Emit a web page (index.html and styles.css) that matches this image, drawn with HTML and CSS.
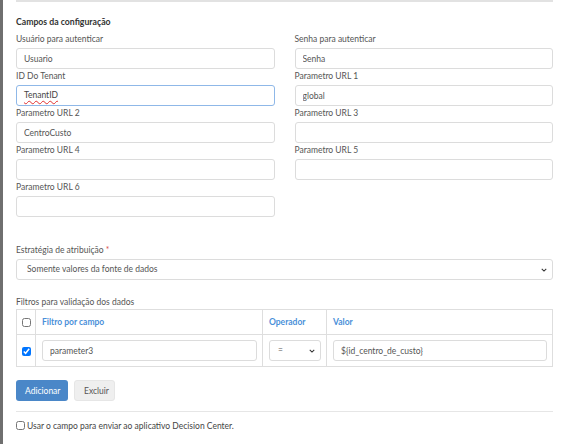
FILE: index.html
```html
<!DOCTYPE html>
<html lang="pt-BR">
<head>
<meta charset="utf-8">
<title>Campos da configuração</title>
<link rel="stylesheet" href="styles.css">
</head>
<body>
<div class="page">
  <div class="strip"></div>
  <div class="modal">
    <div class="topline"></div>
    <h3 class="title">Campos da configuração</h3>
    <div class="grid">
      <div class="field">
        <label class="lbl">Usuário para autenticar</label>
        <input class="ctl" type="text" value="Usuario">
      </div>
      <div class="field">
        <label class="lbl">Senha para autenticar</label>
        <input class="ctl" type="text" value="Senha">
      </div>
      <div class="field">
        <label class="lbl">ID Do Tenant</label>
        <div class="ctl focused"><span class="spell">TenantID</span></div>
      </div>
      <div class="field">
        <label class="lbl">Parametro URL 1</label>
        <input class="ctl" type="text" value="global">
      </div>
      <div class="field">
        <label class="lbl">Parametro URL 2</label>
        <input class="ctl" type="text" value="CentroCusto">
      </div>
      <div class="field">
        <label class="lbl">Parametro URL 3</label>
        <input class="ctl" type="text" value="">
      </div>
      <div class="field">
        <label class="lbl">Parametro URL 4</label>
        <input class="ctl" type="text" value="">
      </div>
      <div class="field">
        <label class="lbl">Parametro URL 5</label>
        <input class="ctl" type="text" value="">
      </div>
      <div class="field">
        <label class="lbl">Parametro URL 6</label>
        <input class="ctl" type="text" value="">
      </div>
    </div>

    <div class="strategy">
      <label class="lbl">Estratégia de atribuição <span class="req">*</span></label>
      <div class="selectwrap">
        <select class="ctl sel">
          <option>Somente valores da fonte de dados</option>
        </select>
        <svg class="chev" viewBox="0 0 8 5" width="6" height="4"><path d="M1 1 L4 4 L7 1" fill="none" stroke="#333" stroke-width="1.4"/></svg>
      </div>
    </div>

    <div class="filters">
      <label class="lbl tight">Filtros para validação dos dados</label>
      <table class="tbl">
        <colgroup>
          <col class="c1"><col class="c2"><col class="c3"><col class="c4">
        </colgroup>
        <thead>
          <tr>
            <th class="chk"><input type="checkbox" class="cb"></th>
            <th>Filtro por campo</th>
            <th>Operador</th>
            <th>Valor</th>
          </tr>
        </thead>
        <tbody>
          <tr>
            <td class="chk"><input type="checkbox" class="cb" checked></td>
            <td><input class="ctl" type="text" value="parameter3"></td>
            <td>
              <div class="selectwrap">
                <select class="ctl sel op"><option>=</option></select>
                <svg class="chev" viewBox="0 0 8 5" width="6" height="4"><path d="M1 1 L4 4 L7 1" fill="none" stroke="#333" stroke-width="1.4"/></svg>
              </div>
            </td>
            <td><input class="ctl" type="text" value="${id_centro_de_custo}"></td>
          </tr>
        </tbody>
      </table>
    </div>

    <div class="buttons">
      <button class="btn primary">Adicionar</button>
      <button class="btn secondary">Excluir</button>
    </div>

    <div class="divider"></div>
    <label class="dc"><input type="checkbox" class="cb small">Usar o campo para enviar ao aplicativo Decision Center.</label>
    <div class="divider last"></div>
  </div>
</div>
</body>
</html>
```

FILE: styles.css
```css
* { box-sizing: border-box; }
html, body { margin: 0; padding: 0; background: #fff; }
body {
  font-family: Lato, "Liberation Sans", sans-serif;
  font-size: 8.5px;
  color: #555;
  width: 567px;
  height: 444px;
  overflow: hidden;
}
.page { display: flex; height: 444px; }
.strip { width: 3px; background: #6f6f6f; flex: none; }
.modal { flex: 1; padding: 0 14px 0 13px; }
.topline { height: 2px; background: #e2e2e2; }
.title {
  margin: 14px 0 4px;
  font-size: 8.7px;
  line-height: 12px;
  font-weight: 700;
  color: #333;
}
.grid {
  display: grid;
  grid-template-columns: 1fr 1fr;
  column-gap: 20px;
}
.field { display: flex; flex-direction: column; }
.lbl {
  display: block;
  line-height: 14px;
  margin-bottom: 2px;
  color: #555;
}
.lbl.tight { margin-bottom: 0; }
.req { color: #d9534f; }
.ctl {
  display: block;
  width: 100%;
  height: 21px;
  border: 1px solid #dcdcdc;
  border-radius: 3px;
  padding: 0 7px;
  font-family: inherit;
  font-size: 8.5px;
  color: #555;
  background: #fff;
  outline: none;
  line-height: 19px;
}
.focused { border-color: #8fb8e8; }
.spell {
  text-decoration: underline wavy #e03030;
  text-decoration-thickness: 1px;
  text-underline-offset: 2px;
  color: #444;
}
.strategy { margin-top: 26px; }
.selectwrap { position: relative; }
.sel {
  appearance: none;
  -webkit-appearance: none;
  padding: 0 10px;
  height: 21px;
}
.chev { position: absolute; right: 6px; top: 9px; }
.filters { margin-top: 15px; }
.tbl {
  width: 100%;
  border-collapse: collapse;
  table-layout: fixed;
  border: 1px solid #dedede;
}
.c1 { width: 19px; }
.c2 { width: 227px; }
.c3 { width: 64px; }
.tbl th, .tbl td { border: 1px solid #dedede; }
.tbl th {
  height: 25px;
  text-align: left;
  font-weight: 700;
  color: #4a90d9;
  padding: 0 5px 0 6px;
}
.tbl td { height: 32px; padding: 5px 5px 5px 6px; }
.tbl .chk { padding: 0; text-align: center; }
.cb {
  width: 9px;
  height: 9px;
  margin: 0;
  vertical-align: middle;
}
.op { padding: 0 8px; }
.buttons { display: flex; gap: 6px; margin-top: 13px; }
.btn {
  height: 21px;
  border: 0;
  border-radius: 3px;
  font-family: inherit;
  font-size: 8.5px;
  padding: 0 9px;
  cursor: pointer;
}
.primary { background: #4a87c8; color: #fff; width: 52px; }
.secondary { background: #efefef; color: #555; width: 41px; border: 1px solid #e6e6e6; }
.divider { height: 1px; background: #e6e6e6; margin-top: 10px; }
.dc {
  display: flex;
  align-items: center;
  height: 32px;
  padding-bottom: 5px;
  color: #444;
}
.cb.small { margin-right: 2px; width: 9px; height: 9px; }
.divider.last { margin-top: 0; }
```
